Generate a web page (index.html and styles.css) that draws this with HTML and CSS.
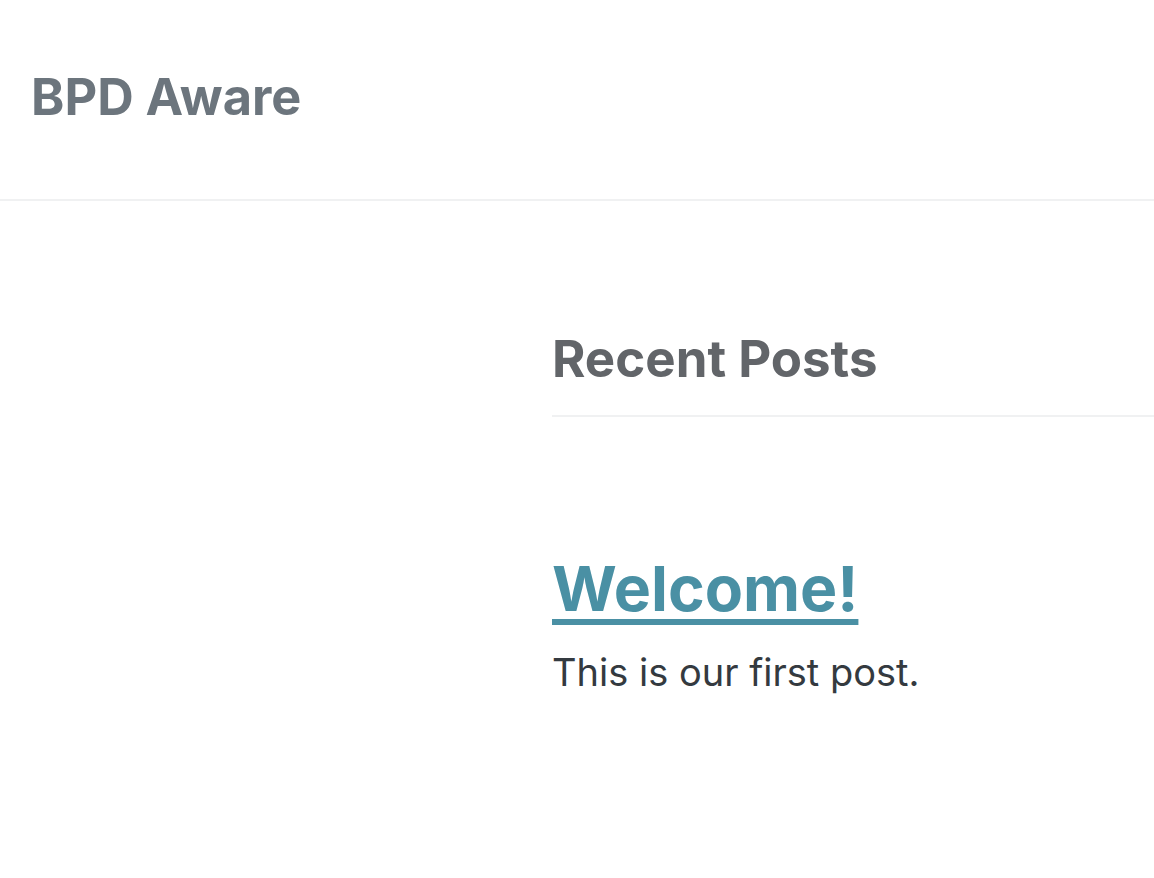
FILE: index.html
```html
<!DOCTYPE html>
<html lang="en">
<head>
<meta charset="utf-8">
<title>BPD Aware</title>
<link rel="stylesheet" href="styles.css">
</head>
<body>
<header class="site-header">
  <a class="brand" href="#">BPD Aware</a>
</header>
<main class="layout">
  <div class="side"></div>
  <section class="posts">
    <h2 class="posts-title">Recent Posts</h2>
    <article class="post">
      <h3 class="post-title"><a href="#">Welcome!</a></h3>
      <p class="post-body">This is our first post.</p>
    </article>
  </section>
</main>
</body>
</html>
```
FILE: styles.css
```css
html, body {
  margin: 0;
  padding: 0;
  background: #ffffff;
  font-family: Inter, "Noto Sans", sans-serif;
}
.site-header {
  height: 201px;
  border-bottom: 2px solid #f0f1f2;
  display: flex;
  align-items: center;
  padding: 0 31px;
  box-sizing: border-box;
}
.brand {
  font-size: 50.5px;
  font-weight: 700;
  color: #6c757d;
  text-decoration: none;
  margin-top: -6px;
}
.layout {
  display: grid;
  grid-template-columns: 552px 1fr;
}
.posts {
  padding-top: 127px;
}
.posts-title {
  margin: 0;
  font-size: 51px;
  line-height: 1.2;
  font-weight: 700;
  color: #626569;
  padding-bottom: 26px;
  border-bottom: 2px solid #f0f1f2;
}
.post {
  padding-top: 134px;
}
.post-title {
  margin: 0;
  font-size: 62.5px;
  line-height: 1.2;
  font-weight: 700;
}
.post-title a {
  color: #4a90a4;
  text-decoration: underline;
  text-decoration-thickness: 6px;
  text-underline-offset: 8px;
}
.post-body {
  margin: 23px 0 0;
  font-size: 38px;
  color: #343a40;
}
```
